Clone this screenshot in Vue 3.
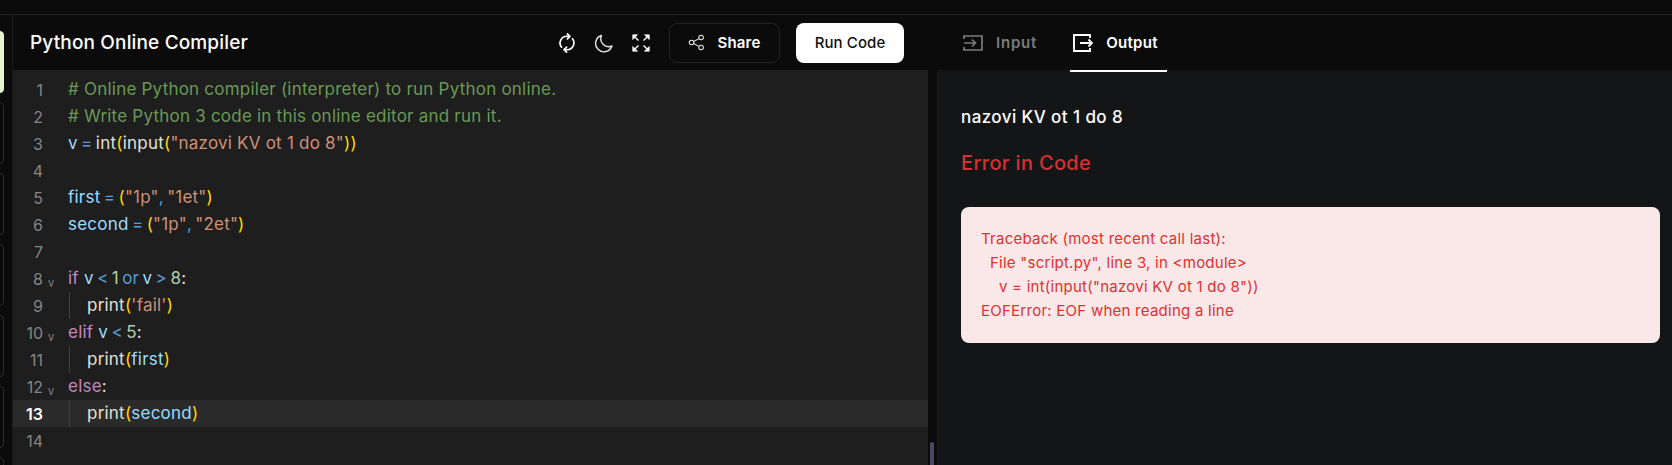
<script setup>
const lines = [
  [['c', '# Online Python compiler (interpreter) to run Python online.']],
  [['c', '# Write Python 3 code in this online editor and run it.']],
  [['v', 'v'], ['o', ' = '], ['f', 'int'], ['b', '('], ['f', 'input'], ['b', '('], ['s', '"nazovi KV ot 1 do 8"'], ['b', '))']],
  [],
  [['v', 'first'], ['o', ' = '], ['b', '('], ['s', '"1p"'], ['o', ', '], ['s', '"1et"'], ['b', ')']],
  [['v', 'second'], ['o', ' = '], ['b', '('], ['s', '"1p"'], ['o', ', '], ['s', '"2et"'], ['b', ')']],
  [],
  [['k', 'if'], ['f', ' '], ['v', 'v'], ['o', ' < '], ['n', '1'], ['o', ' or '], ['v', 'v'], ['o', ' > '], ['n', '8'], ['f', ':']],
  [['f', "print"], ['b', '('], ['s', "'fail'"], ['b', ')']],
  [['k', 'elif'], ['f', ' '], ['v', 'v'], ['o', ' < '], ['n', '5'], ['f', ':']],
  [['f', 'print'], ['b', '('], ['v', 'first'], ['b', ')']],
  [['k', 'else'], ['f', ':']],
  [['f', 'print'], ['b', '('], ['v', 'second'], ['b', ')']],
  [],
]
const folds = [8, 10, 12]
const indented = [9, 11, 13]
const trace = `Traceback (most recent call last):
  File "script.py", line 3, in <module>
    v = int(input("nazovi KV ot 1 do 8"))
EOFError: EOF when reading a line`
</script>

<template>
  <div class="page">
    <div class="topbar"></div>
    <div class="main">
      <aside class="rail">
        <div class="tile active"></div>
        <div class="tile"></div>
        <div class="tile"></div>
        <div class="tile"></div>
        <div class="tile"></div>
        <div class="tile"></div>
        <div class="tile"></div>
      </aside>
      <section class="left">
        <header class="head">
          <h1 class="title">Python Online Compiler</h1>
          <div class="tools">
            <svg class="ic" viewBox="0 0 24 24" fill="none" stroke="#fff" stroke-width="2" stroke-linecap="round" stroke-linejoin="round">
              <path d="M5.5 17A8 8 0 0 1 12.5 4h2.5" />
              <path d="M12.5 1l3 3-3 3" />
              <path d="M18.5 7A8 8 0 0 1 11.5 20H9" />
              <path d="M11.5 23l-3-3 3-3" />
            </svg>
            <svg class="ic" viewBox="0 0 24 24" fill="none" stroke="#e6e6e6" stroke-width="1.7" stroke-linejoin="round">
              <path d="M9 3a9.5 9.5 0 0 0 12.5 12.5A10 10 0 1 1 9 3z" />
            </svg>
            <svg class="ic" viewBox="0 0 24 24" fill="#fff" stroke="#fff" stroke-width="1.6">
              <path d="M2 2h6L2 8zM22 2h-6l6 6zM2 22h6l-6-6zM22 22h-6l6-6z" stroke-width="0.6" />
              <path d="M5 5l4 4M19 5l-4 4M5 19l4-4M19 19l-4-4" fill="none" />
            </svg>
            <button class="share">
              <svg class="share-ic" viewBox="0 0 24 24" fill="none" stroke="#e6e6e6" stroke-width="1.5">
                <circle cx="5" cy="12" r="3.2" /><circle cx="18.5" cy="5" r="3.2" /><circle cx="18.5" cy="19" r="3.2" />
                <path d="M8 10.5l7.6-4M8 13.5l7.6 4" />
              </svg>
              Share
            </button>
            <button class="run">Run Code</button>
          </div>
        </header>
        <div class="editor">
          <div
            v-for="(line, i) in lines"
            :key="i"
            class="line"
            :class="{ current: i === 12 }"
          >
            <span class="num">{{ i + 1 }}</span>
            <span class="fold"><span v-if="folds.includes(i + 1)">v</span></span>
            <span class="code" :class="{ indent: indented.includes(i + 1) }"><span v-for="(t, j) in line" :key="j" :class="t[0]">{{ t[1] }}</span></span>
          </div>
        </div>
      </section>
      <div class="divider"><div class="thumb"></div></div>
      <section class="right">
        <nav class="tabs">
          <div class="tab">
            <svg class="tab-ic" viewBox="0 0 20 16" fill="none" stroke="#7c7c7c" stroke-width="1.7">
              <path d="M1 4V1h18v14H1v-3" /><path d="M1 8h11M9 4.5L12.5 8 9 11.5" />
            </svg>
            Input
          </div>
          <div class="tab on">
            <svg class="tab-ic big" viewBox="0 0 20 18" fill="none" stroke="#fff" stroke-width="1.9">
              <path d="M17 4V1H1v16h16v-3" /><path d="M7 9h12M15.5 5.5L19 9l-3.5 3.5" />
            </svg>
            Output
          </div>
        </nav>
        <div class="out">
          <div class="stdout">nazovi KV ot 1 do 8</div>
          <div class="err">Error in Code</div>
          <pre class="trace">{{ trace }}</pre>
        </div>
      </section>
    </div>
  </div>
</template>

<style>
html, body { margin: 0; background: #0b0b0b; }
</style>

<style scoped>
.page {
  width: 1672px;
  height: 465px;
  overflow: hidden;
  background: #0b0b0b;
  font-family: Inter, "Noto Sans", sans-serif;
  display: flex;
  flex-direction: column;
}
.topbar { height: 14px; flex: none; border-bottom: 1px solid #232323; }
.main { flex: 1; display: flex; min-height: 0; }
.rail {
  width: 13px;
  flex: none;
  display: flex;
  flex-direction: column;
  align-items: flex-end;
  padding-top: 16px;
  gap: 9px;
  padding-right: 8px;
  box-sizing: border-box;
  border-right: 1px solid #1c1c1c;
}
.tile {
  flex: none;
  width: 30px;
  height: 62px;
  box-sizing: border-box;
  border: 1px solid #2c2c2c;
  border-radius: 4px;
}
.tile.active { background: #e3f2d0; border-color: #e3f2d0; }
.left { width: 915px; flex: none; display: flex; flex-direction: column; }
.head {
  height: 55px;
  flex: none;
  display: flex;
  align-items: center;
  justify-content: space-between;
  padding: 0 24px 0 17px;
  box-sizing: border-box;
}
.title { margin: 0; color: #fff; font-size: 19px; font-weight: 500; letter-spacing: 0.15px; }
.tools { display: flex; align-items: center; }
.ic { width: 20px; height: 20px; margin-right: 17px; }
.ic:nth-child(3) { margin-right: 18px; }
.share {
  width: 111px;
  height: 40px;
  border: 1px solid #232323;
  border-radius: 8px;
  background: transparent;
  color: #fff;
  font: 600 15px Inter, sans-serif;
  letter-spacing: 0.2px;
  display: flex;
  align-items: center;
  justify-content: center;
  gap: 12px;
  margin-right: 16px;
  padding: 0 0 0 0;
}
.share-ic { width: 17px; height: 17px; }
.run {
  width: 108px;
  height: 40px;
  border: 0;
  border-radius: 8px;
  background: #fff;
  color: #0f0f0f;
  font: 500 15px Inter, sans-serif;
  letter-spacing: 0.1px;
  padding: 0;
}
.editor {
  flex: 1;
  background: #1e1e1e;
  padding-top: 6px;
  font-size: 17px;
  letter-spacing: 0.22px;
  color: #d4d4d4;
}
.line { height: 27px; display: flex; align-items: center; white-space: pre; }
.line.current { background: #2a2a2a; }
.num { width: 30px; flex: none; text-align: right; color: #858585; font-size: 16px; letter-spacing: 0; }
.current .num { color: #fff; font-weight: 600; }
.fold { width: 25px; flex: none; font-size: 11px; letter-spacing: 0; color: #858585; padding: 8px 0 0 5px; box-sizing: border-box; }
.code { display: block; height: 27px; line-height: 27px; }
.code.indent { border-left: 1px solid #404040; margin-left: 1px; padding-left: 17px; }
.c { color: #6a9955; }
.v { color: #9cdcfe; }
.o { color: #569cd6; word-spacing: -1.7px; }
.f { color: #e0e0d8; }
.b { color: #ffd700; }
.s { color: #ce9178; }
.k { color: #c586c0; }
.n { color: #b5cea8; }
.divider { width: 9px; flex: none; position: relative; background: #0b0b0b; }
.thumb {
  position: absolute;
  left: 2px;
  bottom: 0;
  width: 4px;
  height: 23px;
  background: #4c4860;
  border-radius: 2px 2px 0 0;
}
.right { flex: 1; display: flex; flex-direction: column; min-width: 0; }
.tabs { height: 55px; flex: none; display: flex; padding-left: 23px; gap: 30px; box-sizing: border-box; position: relative; z-index: 1; }
.tab {
  display: flex;
  align-items: center;
  gap: 13px;
  color: #7c7c7c;
  font-size: 15px;
  font-weight: 600;
  letter-spacing: 0.8px;
  padding: 0 3px 2px;
  box-sizing: border-box;
  height: 57px;
}
.tab.on { color: #fff; border-bottom: 2px solid #fff; width: 97px; padding: 0; gap: 13px; letter-spacing: 0.3px; }
.tab-ic { width: 20px; height: 16px; }
.tab-ic.big { height: 18px; margin-left: 3px; }
.out { flex: 1; background: #141517; padding: 35px 12px 0 24px; box-sizing: border-box; }
.stdout { color: #fff; font-size: 17px; font-weight: 500; letter-spacing: 0.42px; line-height: 24px; }
.err { color: #d63031; font-size: 20px; font-weight: 500; letter-spacing: 0.33px; line-height: 28px; margin-top: 20px; }
.trace {
  margin: 30px 0 0;
  height: 136px;
  box-sizing: border-box;
  padding: 20px;
  background: #fae8e8;
  border-radius: 8px;
  color: #e03131;
  font: 400 15px/24px Inter, sans-serif;
  letter-spacing: 0.25px;
}
</style>
